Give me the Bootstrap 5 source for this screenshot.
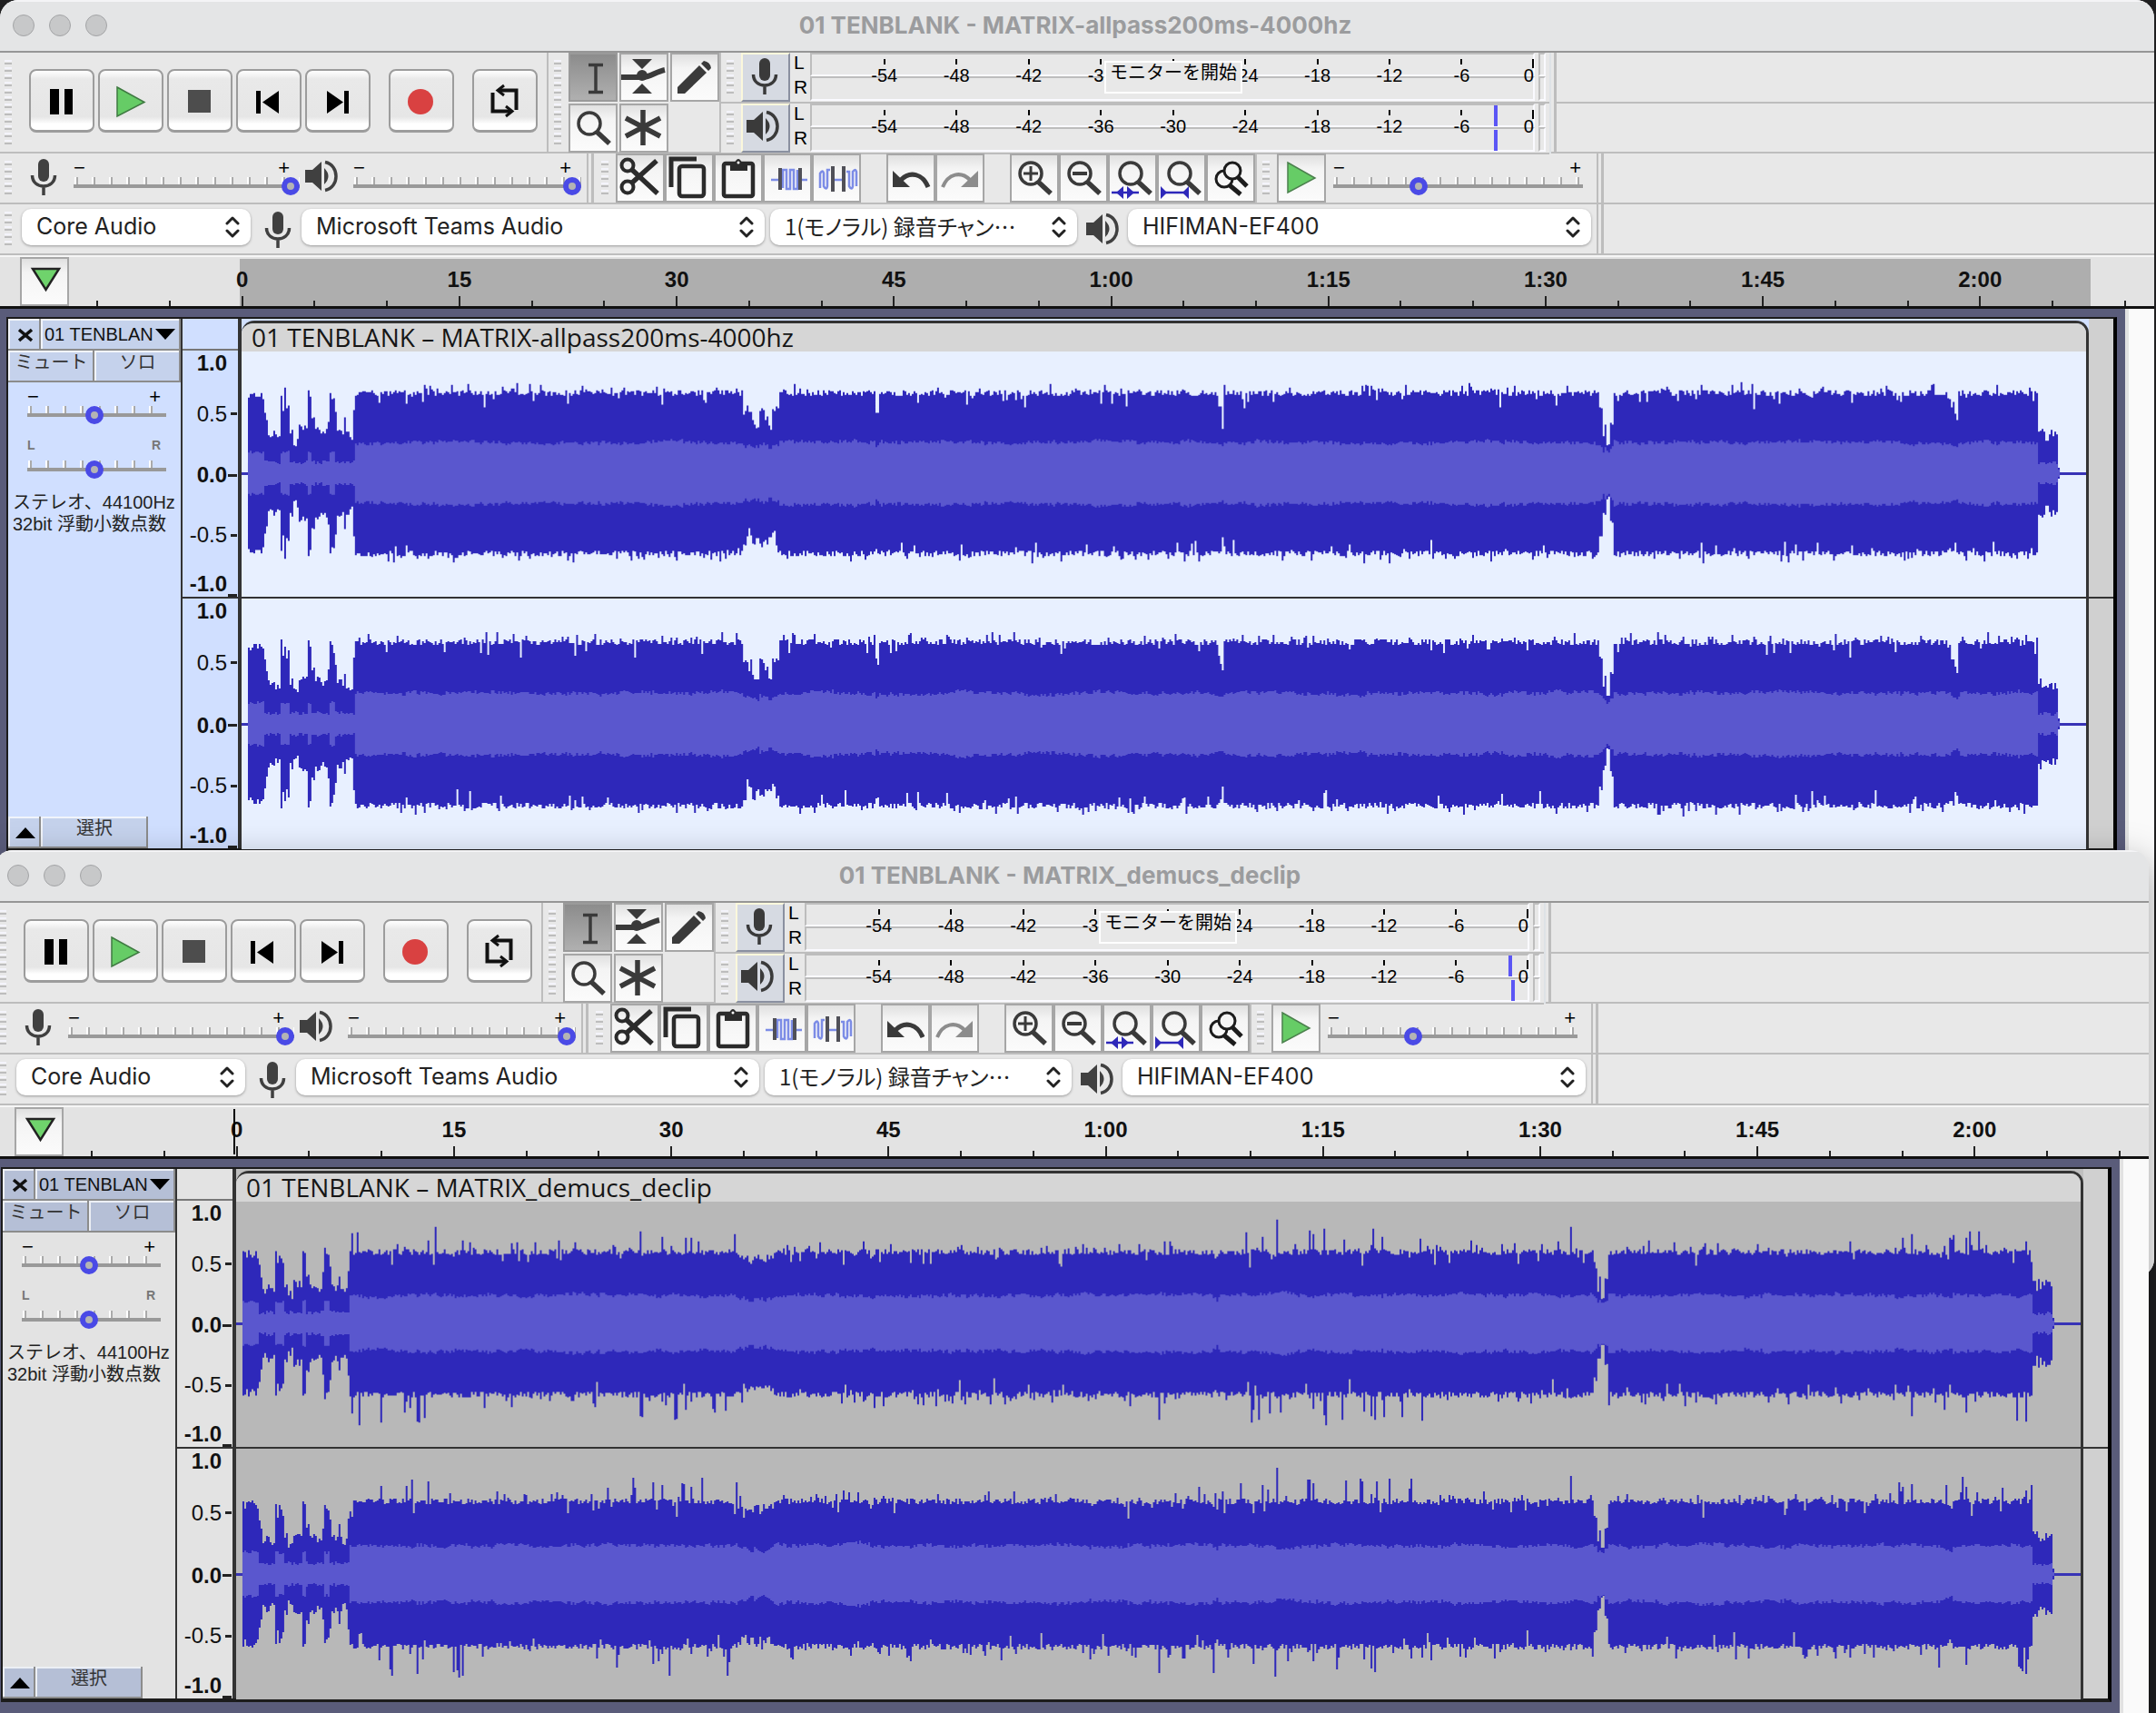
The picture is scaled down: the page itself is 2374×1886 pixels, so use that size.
<!DOCTYPE html>
<html lang="ja">
<head>
<meta charset="utf-8">
<meta name="viewport" content="width=device-width, initial-scale=1">
<title>01 TENBLANK - MATRIX</title>
<link href="https://cdn.jsdelivr.net/npm/bootstrap@5.3.0/dist/css/bootstrap.min.css" rel="stylesheet">
<style>
:root{--ui:"Liberation Sans","Noto Sans CJK JP",sans-serif;--sys:Inter,"Noto Sans CJK JP",sans-serif}
body{background:#1f1f20;font-family:var(--ui);font-size:20px;line-height:24px;color:#000;overflow:hidden}
.desktop{min-height:100vh;overflow:hidden}
.app-window{position:absolute;background:#e8e8e8;border-radius:20px;overflow:hidden}
.win-back{left:0;right:2px;top:0;height:1406px}
.win-front{left:-6px;right:8px;top:936px;height:1000px;box-shadow:0 12px 40px rgba(0,0,0,.35)}
.titlebar{height:58px;background:#e4e5e6;border-bottom:2px solid #969696;padding:0 18px 0 14px;box-shadow:inset 0 2px #f4f4f6}
.titlebar h1{font:700 26px/54px var(--sys);color:#9b9c9e}
.dot{width:24px;height:24px;border-radius:50%;background:#c7c8c9;border:1px solid #a3a4a6}
.titlebar .side{width:120px}
.bar{border-right:2px solid #bdbdbd;border-bottom:2px solid #bdbdbd}
.endcap{width:6px;border-right:3px solid #bdbdbd;border-bottom:2px solid #bdbdbd}
.rest{border-bottom:2px solid #bdbdbd}
.grip{width:8px;background:repeating-linear-gradient(#f4f4fb 0 2px,#e8e8e8 2px 3px,#bdbdbd 3px 5px,#e8e8e8 5px 8px)}
.tbtn{width:72px;height:70px;padding:0;border:2px solid #9c9c9c;border-bottom-width:3px;border-radius:8px;background:linear-gradient(#fff,#e9e9e9 14%,#e6e6e6 78%,#fff 90%)}
.tbtn svg{display:block;width:72px;height:70px;margin:-2px}
.sq{width:54px;height:54px;padding:0;border:2px solid #a6a6a6;background:linear-gradient(#e0e0e0,#f4f4f4 30%,#fbfbfb);display:block}
.sq svg,.mbtn svg{display:block;width:54px;height:54px;margin:-2px;color:#3a3a3a}
.sq.down{background:linear-gradient(#8c8c8c,#b0b0b0);border-color:#9a9a9a}
.tools{width:168px;gap:2px}
.mbtn{width:54px;height:54px;padding:0;border:2px solid #8a90a0;border-left-color:#fbf8dc;border-top-color:#fbf8dc;background:#d6dae2}
.meter-line{height:56px;border-bottom:2px solid #bdbdbd;padding-left:6px}
.lr{width:18px;font-size:21px;line-height:27px;margin-top:-3px}
.meter{position:relative;height:54px}
.ch{border:2px solid #fafaff;border-top-color:#bdbdbd;border-left-color:#bdbdbd;height:26px}
.ch+.ch{height:27px}
.scale{position:absolute;inset:0;padding:7px 1px 0 42px}
.scale span{flex:2 1 0;text-align:center;line-height:24px}
.scale span::before{content:"";display:block;width:2px;height:6px;margin:0 auto;background:#000}
.scale span:last-child{flex:1 1 0;text-align:right}
.scale span:last-child::before{margin-right:0;height:10px;margin-bottom:-4px}
.tipbox{position:absolute;left:324px;top:9px;width:152px;height:36px;border:2px solid #fff;background:#e8e8e8;line-height:22px;white-space:nowrap;text-align:center;padding:0 0 10px}
.peaks i{position:absolute;width:4px;height:23px;background:#5b56f5}
.mini{width:8px}
.sl{position:relative;height:44px}
.sl .ends{font-size:22px;line-height:16px;height:18px;padding-right:6px}
.mixer .sl .ends{padding-right:11px}
.speed .sl .ends{padding-right:2px}
.sl .ends.small-lr{font-size:14px;font-weight:700;color:#777;height:25px}
.ticks{height:8px;margin-left:1px;background:repeating-linear-gradient(90deg,#fff 0 2px,#aaa 2px 4px,transparent 4px 19px)}
.sl input{appearance:none;-webkit-appearance:none;display:block;width:100%;height:20px;margin:-8px 0 0;background:transparent}
.sl input::-webkit-slider-runnable-track{height:4px;background:#999}
.sl input::-webkit-slider-thumb{-webkit-appearance:none;width:20px;height:20px;margin-top:-8px;border-radius:50%;border:6px solid #4a4ae6;background:#b4b4b4}
.dev{height:40px;margin-top:4px;border:0;border-radius:10px;font:400 25px/30px var(--sys);color:#222;padding:4px 40px 6px 16px;background-color:#fff;box-shadow:0 1px 3px rgba(0,0,0,.35);background-position:right 12px center;background-size:16px 26px;
--bs-form-select-bg-img:url("data:image/svg+xml,%3csvg xmlns='http://www.w3.org/2000/svg' viewBox='0 0 16 26'%3e%3cpath fill='none' stroke='%23222' stroke-width='3' stroke-linecap='round' stroke-linejoin='round' d='M2 9l6-6 6 6M2 17l6 6 6-6'/%3e%3c/svg%3e")}
.dev.jp{font:400 24px/30px "Noto Sans CJK JP",sans-serif;font-feature-settings:"palt"}
.ico{width:54px;height:54px;color:#404040;flex:none}
.between{margin:1px -2px 0 4px}
.timeline{height:59px;background:#e3e3e3;border-bottom:3px solid #111;border-top:2px solid #f6f6f6;position:relative;overflow:hidden}
.timeline .sel{position:absolute;left:264px;right:70px;top:2px;bottom:0;background:#aeaeae}
.timeline .cells{position:relative;margin:0 -167px 0 -92px;height:54px}
.timeline .cells>div{flex:1 1 0}
.timeline .lab{font-size:24px;font-weight:700;line-height:26px;height:43px;padding-top:12px;text-align:center;color:#111}
.timeline .tk{height:11px}
.timeline .tk i{width:2px;height:6px;background:#222}
.timeline .tk i:nth-child(2){height:11px}
.pin{position:absolute;left:22px;top:0;z-index:2}
.cursor{position:absolute;left:263px;top:2px;width:2px;height:50px;background:#000}
.tracks{background:#5a5c7a;padding:9px 0 0 7px}
.track{border:2px solid #1c1c1c;border-right:4px solid #000;border-bottom-width:4px;height:589px;margin-right:9px}
.vscroll{width:32px;background:#fafafa;border-left:4px solid #e2e2e2}
.tcp{width:192px;border-right:2px solid #333}
.pbtn{border:0;border-right:2px solid #8c8c8c;border-bottom:2px solid #8c8c8c;box-shadow:inset 2px 2px rgba(255,255,255,.75);height:35px;padding:0 0 0 4px;color:#111;font-size:20px;line-height:24px;white-space:nowrap;overflow:hidden}
.pbtn.txt{color:#333;line-height:26px;padding:0 0 8px 2px}
.info{font-size:20px;line-height:24px;color:#222;padding:15px 0 0 5px;white-space:nowrap}
.gain{padding:0 16px 0 21px}
.amp-ruler{width:65px;border-right:4px solid #333}
.amp-ruler .hd{height:35px;border-bottom:2px solid #777}
.vrc{color:#111;font-size:24px}
.vrc span{height:28px;line-height:28px;display:flex;justify-content:flex-end;align-items:center;padding-right:1px}
.vrc span.mk{font-weight:700}
.vrc span::after{content:"";width:7px;height:3px;margin-left:4px;background:#222}
.vrc span.mk::after{width:10px;margin-left:1px}
.vrc span.one::after{background:transparent}
.vrc span.neg::after{align-self:flex-end}
.cd1{height:273px;border-bottom:2px solid #333}
.clipwrap{padding-top:2px}
.clip{border-top:3px solid #333;border-right:3px solid #333;border-radius:14px 14px 0 0;overflow:hidden}
.clip h2{height:31px;margin:0;background:#d6d6d6;font:400 28px/30px "Open Sans","Noto Sans",sans-serif;color:#161616;padding-left:11px;white-space:nowrap}
.clip svg{display:block;width:100%}
.c1{border-bottom:2px solid #333;height:272px}
.c2{height:276px}
.after{width:27px;background:#d0d0d0}
.after div{height:308px;border-bottom:2px solid #333}
.selected .tcp,.selected .amp-ruler,.selected .clipwrap{background:#d0dfff}
.selected .pbtn{background:#c5d2ec}
.selected .wave{background:#e8f0ff}
.plain .tcp,.plain .amp-ruler{background:#e3e3e3}
.plain .clipwrap{background:#bfbfbf}
.plain .pbtn{background:#b5bfd6}
.plain .wave{background:#b8b8b8}
</style>
<script src="https://cdn.jsdelivr.net/npm/bootstrap@5.3.0/dist/js/bootstrap.bundle.min.js"></script>
</head>
<body>
<svg class="d-none">
<symbol id="pause" viewBox="0 0 72 70"><path d="M23 22h10v28H23zM39 22h9v28h-9z"/></symbol>
<symbol id="play" viewBox="0 0 72 70"><path d="M21 20L51 36.500L21 52z" fill="#66cc66" stroke="#3f7a42" stroke-width="1.500"/></symbol>
<symbol id="stop" viewBox="0 0 72 70"><path d="M23 23h25v25H23z" fill="#4d4d4d"/></symbol>
<symbol id="prev" viewBox="0 0 72 70"><path d="M22 24h5v25h-5zM47 24v25L29 36.500z"/></symbol>
<symbol id="next" viewBox="0 0 72 70"><path d="M24 24v25L42 36.500zM43 24h5v25h-5z"/></symbol>
<symbol id="rec" viewBox="0 0 72 70"><circle cx="35" cy="36" r="14" fill="#d94141"/></symbol>
<symbol id="loop" viewBox="0 0 72 70"><path d="M22.500 26v20.500H42M30 23.500h18.500V45" fill="none" stroke="#111" stroke-width="4"/><path d="M35 18l-7 5.500 7 5.500M37 41l7 5.500-7 5.500" fill="none" stroke="#111" stroke-width="3"/></symbol>
<symbol id="ibeam" viewBox="0 0 54 54"><path d="M22 13.500h16M22 43.500h16M30 13v31" fill="none" stroke="currentColor" stroke-width="3.500"/></symbol>
<symbol id="env" viewBox="0 0 54 54"><path d="M14 7h22L25 18zM14 45h22L25 34z" fill="currentColor"/><path d="M2 27h24c8 0 14-6 24-8" fill="none" stroke="currentColor" stroke-width="6"/><circle cx="25" cy="25" r="6" fill="currentColor"/></symbol>
<symbol id="pencil" viewBox="0 0 54 54"><path d="M8 38L32 14l8 8-24 23H8zM34 12l3-3q7 1 8 8l-3 3z" fill="currentColor"/></symbol>
<symbol id="mag" viewBox="0 0 54 54"><circle cx="23" cy="22" r="12" fill="none" stroke="currentColor" stroke-width="3.500"/><path d="M31 31l14 13" stroke="currentColor" stroke-width="5.500"/></symbol>
<symbol id="star" viewBox="0 0 54 54"><path d="M26 7v39M7 36l38-20M7 16l38 20" stroke="currentColor" stroke-width="5.500"/></symbol>
<symbol id="mic" viewBox="0 0 54 54"><rect x="20" y="6" width="12" height="25" rx="6" fill="currentColor"/><path d="M13.500 24c0 16 25 16 25 0M26 36v10" fill="none" stroke="currentColor" stroke-width="3.500"/></symbol>
<symbol id="spk" viewBox="0 0 54 54"><path d="M6 18h8L24 9v32l-10-9H6zM27 16q9 9 0 18z" fill="currentColor"/><path d="M28 9.500c16 3 16 28 0 31" fill="none" stroke="currentColor" stroke-width="3.500"/></symbol>
<symbol id="cut" viewBox="0 0 54 54"><g fill="none" stroke="#2b2b2b"><circle cx="13" cy="13" r="6.500" stroke-width="4"/><circle cx="13" cy="37" r="6.500" stroke-width="4"/><path d="M17 17l29 27M17 33L45 8" stroke-width="5.500"/></g></symbol>
<symbol id="copy" viewBox="0 0 54 54"><path d="M7 37V6h28" fill="none" stroke="#2b2b2b" stroke-width="5"/><rect x="16" y="14" width="27" height="33" rx="3" fill="none" stroke="#2b2b2b" stroke-width="4.500"/></symbol>
<symbol id="paste" viewBox="0 0 54 54"><rect x="11" y="11" width="32" height="36" rx="2" fill="none" stroke="#2b2b2b" stroke-width="4.500"/><path d="M18 10h5q4-8 8 0h6v9H18z" fill="#2b2b2b"/><circle cx="27" cy="10" r="1.500" fill="#fff"/></symbol>
<symbol id="trim" viewBox="0 0 54 54"><path d="M9 29h8M43 29h6M22 38V18h4v21h4V18h4v21h4V18" fill="none" stroke="#7c8ce6" stroke-width="2.500"/><path d="M17 16h4v24h-4zM39 16h4v24h-4z" fill="#505058"/></symbol>
<symbol id="sil" viewBox="0 0 54 54"><path d="M9 38V22q3-5 4 0v14q3 5 4 0V18h3M25 29h8M38 20h3v16q3 5 4 0V20q3-4 4 0v16" fill="none" stroke="#7c8ce6" stroke-width="2.500"/><path d="M21 14h4v28h-4zM33 14h4v28h-4z" fill="#505058"/></symbol>
<symbol id="undo" viewBox="0 0 54 54"><path d="M7 19v18h19z" fill="currentColor"/><path d="M16 29c10-10 24-7 30 8" fill="none" stroke="currentColor" stroke-width="5"/></symbol>
<symbol id="redo" viewBox="0 0 54 54"><path d="M47 19v18H28z" fill="#8c8c8c"/><path d="M38 29c-10-10-24-7-30 8" fill="none" stroke="#8c8c8c" stroke-width="4"/></symbol>
<symbol id="zin" viewBox="0 0 54 54"><use href="#mag"/><path d="M15 22h16M23 14v16" stroke="currentColor" stroke-width="3"/></symbol>
<symbol id="zout" viewBox="0 0 54 54"><use href="#mag"/><path d="M15 22h16" stroke="currentColor" stroke-width="4"/></symbol>
<symbol id="zsel" viewBox="0 0 54 54"><use href="#mag" x="2"/><path d="M4 43h30" stroke="#2e28ba" stroke-width="2.500"/><path d="M9 43l8-7v14zM29 43l-8-7v14z" fill="#2e28ba"/></symbol>
<symbol id="zfit" viewBox="0 0 54 54"><use href="#mag" x="2"/><path d="M5 43h29" stroke="#2e28ba" stroke-width="2.500"/><path d="M4 36l7 7-7 7zM35 36l-7 7 7 7z" fill="#2e28ba"/></symbol>
<symbol id="ztog" viewBox="0 0 54 54"><g fill="none" stroke="#1c1c1c" stroke-width="3"><circle cx="20" cy="28" r="9"/><path d="M26 35l12 10" stroke-width="5"/><circle cx="29" cy="19" r="9" fill="#f4f4f4"/><path d="M35 26l10 10" stroke-width="5"/></g></symbol>
<symbol id="playsq" viewBox="0 0 54 54"><path d="M12 10l30 17-30 16z" fill="#66cc66" stroke="#4b804d" stroke-width="1.500"/></symbol>
<symbol id="pinico" viewBox="0 0 54 54"><path d="M14 13h29L28.500 36z" fill="#6fd36c" stroke="#222" stroke-width="2.500"/></symbol>
</svg>

<main class="desktop position-relative" id="desktop"></main>

<script>
const icon = (n, c = '') => `<svg class="${c}" aria-hidden="true"><use href="#${n}"/></svg>`;
const sq = (n, label, c = '') => `<button type="button" class="sq ${c}" aria-label="${label}">${icon(n)}</button>`;
const tb = (n, label, c = '') => `<button type="button" class="tbtn ${c}" aria-label="${label}">${icon(n)}</button>`;
const slider = (label, value, l = '−', r = '+', c = '') =>
  `<div class="sl w-100"><div class="ends d-flex justify-content-between ${c}"><span>${l}</span><span>${r}</span></div><div class="ticks"></div><input type="range" aria-label="${label}" value="${value}"></div>`;

/* Seeded noise so that the waveforms are the same on every load */
function rng(seed) { return () => (seed = (seed * 1664525 + 1013904223) >>> 0) / 4294967296; }

/* Opening bars: [x, amplitude] steps */
const INTRO = [[7,88],[24,70],[26,58],[28,44],[38,42],[42,92],[44,72],[46,92],[48,78],[52,48],[56,36],[62,50],[72,93],[74,85],[76,62],[80,50],[88,46],[94,62],[96,92],[98,84],[102,70],[104,46],[112,60],[115,42],[123,70],[125,88]];
/* Dips: [from, to, top factor, bottom factor] */
const DIPS = [[553,557,.75,.92],[557,563,.78,.8],[563,566,.62,.9],[566,571,.55,.8],[571,576,.8,.88],[576,580,.66,.82],[580,584,.55,.8],[584,589,.78,.76],[589,592,.8,.9],[699,702,.74,.92],[1077,1080,.85,.95],[1080,1082,.68,.8],[1497,1500,.8,.8],[1500,1503,.45,.5],[1503,1505,.6,.5],[1505,1508,.35,.3],[1508,1512,.62,.6],[1880,1884,.9,.95],[1884,1888,.8,.95],[1888,1890,.72,.82],[1890,1893,.66,.9]];
/* Single peaks of the rougher recording: [x, top factor, bottom factor] */
const PEAKS = [[1147,1.46,1.05],[1183,1.3,1.05],[1471,1.35,1.05],[199,1,1.38],[1017,1,1.36],[1131,1.22,1.05],[1187,1.25,1.2],[1251,1.1,1.3],[1255,1.05,1.35],[501,1.2,1.1],[469,1.22,1.1],[1837,1.2,1],[1907,1.2,1.25],[1973,1.15,1.38]];

function wave(w, ch) {
  const r = rng(w.seed + ch * 77), H = ch ? 276 : 272, zero = ch ? 138 : 135;
  const full = w.full[ch], rough = w.rough;
  let top = '', bot = '', rt = '', rb = '', drift = 0;
  for (let x = 7; x < 2004; x += 2) {
    drift = drift * .85 + (r() - .5) * 2;
    let a = full, rms = w.rms + drift;
    const intro = x < 125;
    if (intro) { a = 88; for (const [p, v] of INTRO) if (x >= p) a = v; rms = a > 70 ? 24 : 12; a = a * w.full[0] / 91 + (r() - .5) * 10; }
    if (x >= 1980) { a = 36 + r() * 14; rms = 11; }
    if (x >= 2002) { a = 6; rms = 4; }
    let u = a, d = a;
    if (!intro && x < 1980) {
      const busy = rough && (x < 260 || (x > 400 && x < 560) || (x > 1060 && x < 1310) || x > 1830) ? 1 : .4;
      u += (r() - .5) * 7; d += (r() - .5) * 7;
      if (r() < .15) u += r() * (rough ? 26 * busy : 9);
      if (r() < .15) d += r() * (rough ? 34 * busy : 9);
      if (r() < .06) u -= r() * 16;
      if (r() < .06) d -= r() * 16;
      for (const [s, e, ku, kd] of DIPS) if (x >= s && x < e) {
        const soft = rough && !(x > 1490 && x < 1520);
        u *= soft ? .7 + ku * .3 : ku; d *= soft ? .4 + kd * .6 : kd; rms *= .6 + ku * .38;
      }
      if (rough) for (const [p, ku, kd] of PEAKS) if (Math.abs(x - p) < 1.1) { u = full * ku; d = full * kd; }
    }
    rms += (r() - .5) * 4;
    rms = Math.min(rms, u - 1, d - 1);
    const f = n => Math.round(n), X = x, Y = x + 2;
    top += `L${X} ${f(zero - u)}H${Y}`; bot = `L${Y} ${f(zero + d)}H${X}` + bot;
    rt += `L${X} ${f(zero - rms)}H${Y}`; rb = `L${Y} ${f(zero + rms)}H${X}` + rb;
  }
  return `<svg viewBox="0 0 2034 ${H}" preserveAspectRatio="none" class="wave c${ch + 1}" role="img" aria-label="波形">
    <path d="M0 ${zero - 1}H2034V${zero + 2}H0z" fill="#3733b6"/>
    <path d="M7 ${zero}${top}L2005 ${zero}${bot}z" fill="#2e28ba"/><path d="M7 ${zero}${rt}L2005 ${zero}${rb}z" fill="#5a57ce"/></svg>`;
}

const grow = n => `<div style="flex:${n} 1 0"></div>`;
const vruler = c => `<div class="vrc d-flex flex-column ${c}"><span class="mk one">1.0</span>${grow(28)}<span>0.5</span>${grow(40)}<span class="mk">0.0</span>${grow(38)}<span>-0.5</span>${grow(26)}<span class="mk neg">-1.0</span></div>`;
const meterScale = `<div class="scale d-flex">${[-54,-48,-42,-36,-30,-24,-18,-12,-6,0].map(n => `<span>${n}</span>`).join('')}</div>`;
const meter = (ico, label, extra) => `<div class="meter-line d-flex">
  <div class="grip my-2"></div>
  <button type="button" class="mbtn ms-2" aria-label="${label}">${icon(ico)}</button>
  <div class="lr ps-1"><div>L</div><div>R</div></div>
  <div class="meter flex-fill ms-1"><div class="ch"></div><div class="ch"></div>${meterScale}${extra}</div>
  <div class="mini ms-1 me-1"><div class="ch"></div><div class="ch"></div></div></div>`;
const select = (id, label, text, width, c = '') => `<select id="${id}" aria-label="${label}" class="form-select dev ${c}" style="width:${width}px"><option>${text}</option></select>`;
const grip = `<div class="grip my-2 flex-shrink-0"></div>`;

function appWindow(w) {
  return `<section class="app-window d-flex flex-column ${w.cls}">
  <header class="titlebar d-flex align-items-center flex-shrink-0"><div class="side d-flex gap-3"><span class="dot"></span><span class="dot"></span><span class="dot"></span></div><h1 class="flex-fill text-center m-0">${w.title}</h1><div class="side"></div></header>

  <div class="d-flex flex-shrink-0" style="height:111px">
    <div class="bar d-flex" style="width:604px;padding-left:5px">${grip}
      <div class="d-flex gap-1" style="margin:18px 0 0 19px">${tb('pause','一時停止')}${tb('play','再生')}${tb('stop','停止')}${tb('prev','先頭へ')}${tb('next','末尾へ')}${tb('rec','録音','ms-3')}${tb('loop','ループ','ms-3')}</div></div>
    <div class="bar d-flex" style="width:190px;padding-left:6px">${grip}
      <div class="tools d-flex flex-wrap ms-2 align-content-start">${sq('ibeam','選択','down')}${sq('env','エンベロープ')}${sq('pencil','ドロー')}${sq('mag','ズーム')}${sq('star','マルチ')}</div></div>
    <div style="width:914px" class="border-end border-2">${meter('mic','録音メーター','<button type="button" class="tipbox">モニターを開始</button>')}${meter('spk','再生メーター',`<div class="peaks"><i style="left:${w.peak[0]}px;top:2px"></i><i style="left:${w.peak[1]}px;top:29px"></i></div>`)}</div>
    <div class="endcap"></div><div class="flex-fill d-flex flex-column"><div class="rest flex-fill"></div><div class="rest flex-fill"></div></div>
  </div>

  <div class="d-flex flex-shrink-0" style="height:56px">
    <div class="bar mixer d-flex" style="width:648px;padding-left:5px">${grip}
      <div style="width:9px"></div>${icon('mic','ico')}<div class="pt-2" style="width:249px;margin-left:5px">${slider('録音音量',100)}</div>
      ${icon('spk','ico')}<div class="pt-2" style="width:251px;margin-left:5px">${slider('再生音量',100)}</div></div>
    <div class="endcap"></div>
    <div class="bar d-flex" style="width:730px;padding-left:8px">${grip}
      <div class="d-flex ms-2">${sq('cut','切り取り')}${sq('copy','コピー')}${sq('paste','貼り付け')}${sq('trim','トリム')}${sq('sil','無音化')}</div>
      <div class="d-flex" style="margin:0 28px">${sq('undo','元に戻す')}${sq('redo','やり直し')}</div>
      <div class="d-flex">${sq('zin','拡大')}${sq('zout','縮小')}${sq('zsel','選択範囲に合わせる')}${sq('zfit','プロジェクトに合わせる')}${sq('ztog','ズーム切替')}</div></div>
    <div class="bar speed d-flex" style="width:376px;padding-left:6px">${grip}<div class="ms-2">${sq('playsq','指定速度で再生')}</div><div class="pt-2" style="width:275px;margin-left:8px">${slider('再生速度',33)}</div></div>
    <div class="endcap"></div><div class="rest flex-fill"></div>
  </div>

  <div class="d-flex flex-shrink-0" style="height:56px">
    <div class="bar d-flex" style="width:1760px;padding-left:5px">${grip}
      <div class="d-flex align-items-start" style="padding:1px 0 0 11px">
      ${select(w.id+'-host','オーディオホスト','Core Audio',252)}
      ${icon('mic','ico between')}
      ${select(w.id+'-in','録音デバイス','Microsoft Teams Audio',510)}
      <div style="width:6px"></div>
      ${select(w.id+'-ch','録音チャンネル','1(モノラル) 録音チャン…',338,'jp')}
      ${icon('spk','ico between')}
      ${select(w.id+'-out','再生デバイス','HIFIMAN-EF400',510)}</div></div>
    <div class="endcap"></div><div class="rest flex-fill"></div>
  </div>

  <div class="timeline flex-shrink-0">${w.sel ? '<div class="sel"></div>' : ''}
    <div class="cells d-flex">${['','0','15','30','45','1:00','1:15','1:30','1:45','2:00',''].map(t => `<div><div class="lab">${t}</div><div class="tk d-flex justify-content-around align-items-end"><i></i><i></i><i></i></div></div>`).join('')}</div>
    ${w.sel ? '' : '<div class="cursor"></div>'}<div class="pin">${sq('pinico','再生ヘッド固定')}</div></div>

  <div class="flex-fill d-flex">
    <div class="tracks flex-fill">
      <div class="track d-flex ${w.look}">
        <div class="tcp d-flex flex-column flex-shrink-0">
          <div class="d-flex"><button type="button" class="pbtn" style="width:36px" aria-label="閉じる"><svg width="16" height="16" viewBox="0 0 16 16"><path d="M1 2l14 12M15 2L1 14" stroke="#111" stroke-width="3.500"/></svg></button><button type="button" class="pbtn flex-fill d-flex align-items-center justify-content-between pe-1">01 TENBLAN<svg width="22" height="12" viewBox="0 0 22 12"><path d="M0 0h22L11 12z"/></svg></button></div>
          <div class="d-flex"><button type="button" class="pbtn txt" style="width:95px">ミュート</button><button type="button" class="pbtn txt flex-fill">ソロ</button></div>
          <div class="gain" style="padding-top:8px">${slider('ゲイン',48)}</div>
          <div class="gain" style="padding-top:9px">${slider('パン',48,'L','R','small-lr')}</div>
          <div class="info">ステレオ、44100Hz<br>32bit 浮動小数点数</div>
          <div class="mt-auto d-flex"><button type="button" class="pbtn" style="width:36px" aria-label="折りたたむ"><svg width="22" height="12" viewBox="0 0 22 12"><path d="M0 12h22L11 0z"/></svg></button><button type="button" class="pbtn txt" style="width:118px">選択</button></div>
        </div>
        <div class="amp-ruler d-flex flex-column flex-shrink-0"><div class="hd flex-shrink-0"></div>${vruler('cd1')}${vruler('flex-fill')}</div>
        <div class="clipwrap flex-fill"><div class="clip"><h2>${w.clip}</h2>${wave(w,0)}${wave(w,1)}</div></div>
        <div class="after flex-shrink-0"><div></div></div>
      </div>
    </div>
    <div class="vscroll flex-shrink-0"></div>
  </div>
</section>`;
}

document.getElementById('desktop').innerHTML = [
  {id:'a',cls:'win-back',look:'selected',sel:true,title:'01 TENBLANK - MATRIX-allpass200ms-4000hz',clip:'01 TENBLANK – MATRIX-allpass200ms-4000hz',peak:[753,753],seed:11,full:[89,90],rms:34,rough:false},
  {id:'b',cls:'win-front',look:'plain',sel:false,title:'01 TENBLANK - MATRIX_demucs_declip',clip:'01 TENBLANK – MATRIX_demucs_declip',peak:[775,778],seed:29,full:[79,80],rms:31,rough:true}
].map(appWindow).join('');
</script>
</body>
</html>
